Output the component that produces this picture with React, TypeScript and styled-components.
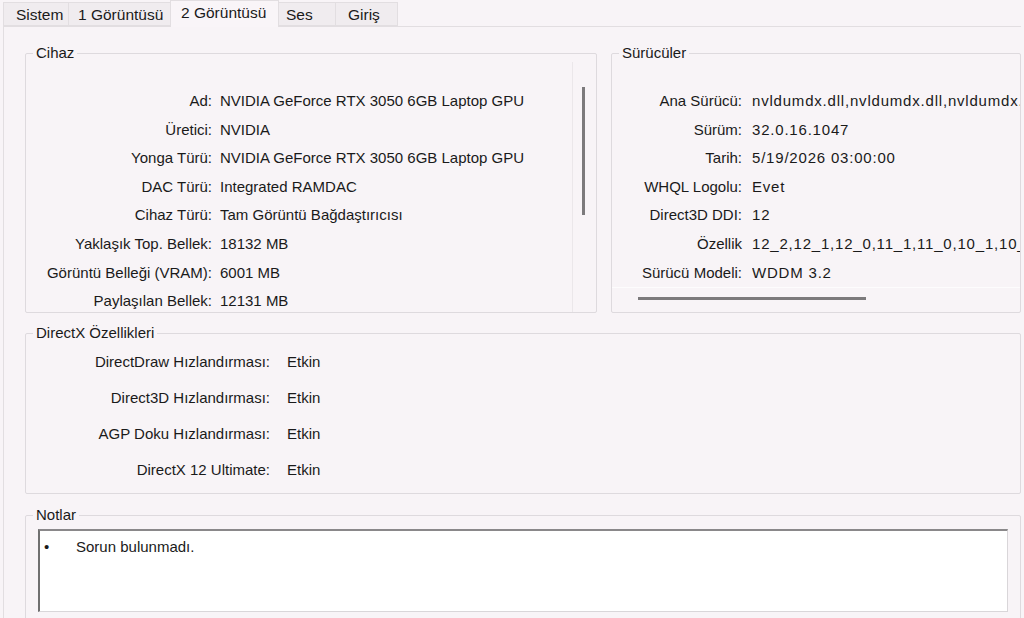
import React from 'react';
import styled, { createGlobalStyle } from 'styled-components';

type Field = { label: string; value: string };

const GlobalStyle = createGlobalStyle`
  html, body {
    margin: 0;
    padding: 0;
    background: #f8f4f7;
    overflow: hidden;
  }
  body {
    font-family: "Liberation Sans", Arial, sans-serif;
    font-size: 15px;
    color: #1a1a1a;
  }
`;

const Window = styled.div`
  width: 1024px;
  height: 618px;
  overflow: hidden;
`;

// Tab strip along the top
const TabStrip = styled.div`
  display: flex;
  align-items: flex-end;
  height: 26px;
  padding-left: 3px;
`;

const Tab = styled.div<{ $w: number; $pl: number; $active?: boolean }>`
  box-sizing: border-box;
  width: ${(p) => p.$w}px;
  height: ${(p) => (p.$active ? 27 : 24)}px;
  margin-left: -1px;
  margin-bottom: ${(p) => (p.$active ? -1 : 0)}px;
  padding-left: ${(p) => p.$pl}px;
  line-height: ${(p) => (p.$active ? 24 : 23)}px;
  font-size: 15.5px;
  background: ${(p) => (p.$active ? '#f9f5f8' : '#f0ecef')};
  border: 1px solid #e2dee1;
  border-bottom: ${(p) => (p.$active ? 'none' : '1px solid #e2dee1')};
  position: relative;
  z-index: ${(p) => (p.$active ? 1 : 0)};
  white-space: nowrap;
  &:first-child {
    margin-left: 0;
  }
`;

const Panel = styled.div`
  box-sizing: border-box;
  width: 1018px;
  margin-left: 3px;
  padding: 17px 0 0 21px;
  border-top: 1px solid #e2dee1;
  border-left: 1px solid #e2dee1;
  height: 600px;
`;

const TopRow = styled.div`
  display: grid;
  grid-template-columns: 572px 410px;
  column-gap: 14px;
  height: 269px;
`;

const Group = styled.fieldset<{ $h: number; $mt?: number }>`
  box-sizing: border-box;
  margin: ${(p) => p.$mt ?? 0}px 0 0 0;
  padding: 0;
  min-width: 0;
  height: ${(p) => p.$h}px;
  border: 1px solid #dedade;
  border-radius: 2px;
  display: flex;
  flex-direction: column;
  overflow: hidden;
`;

const Legend = styled.legend`
  margin-left: 7px;
  padding: 0 3px;
  line-height: 18px;
`;

const ScrollBox = styled.div`
  flex: 1;
  display: flex;
  min-height: 0;
`;

const Rows = styled.div<{ $label: number; $gap: number; $row: number; $pt: number; $spaced?: boolean }>`
  flex: 1;
  min-width: 0;
  min-height: 0;
  overflow: hidden;
  display: grid;
  grid-template-columns: ${(p) => p.$label}px 1fr;
  column-gap: ${(p) => p.$gap}px;
  grid-auto-rows: ${(p) => p.$row}px;
  align-content: start;
  padding-top: ${(p) => p.$pt}px;
  line-height: ${(p) => p.$row}px;
  & > div:nth-child(2n) {
    letter-spacing: ${(p) => (p.$spaced ? '0.8px' : 'normal')};
  }
`;

const Label = styled.div`
  text-align: right;
  white-space: nowrap;
`;

const Value = styled.div`
  white-space: nowrap;
  overflow: hidden;
`;

const VTrack = styled.div`
  width: 23px;
  border-left: 1px solid #ebe7ea;
`;

const VThumb = styled.div`
  width: 3px;
  height: 128px;
  margin: 25px 0 0 9px;
  background: #7c7a7c;
`;

const HTrack = styled.div`
  height: 24px;
  border-top: 1px solid #fdfcfd;
`;

const HThumb = styled.div`
  width: 228px;
  height: 3px;
  margin: 9px 0 0 26px;
  background: #7c7a7c;
`;

const NoteBox = styled.div`
  box-sizing: border-box;
  width: 970px;
  height: 83px;
  margin: 5px 0 0 12px;
  padding: 7px 0 0 4px;
  background: #ffffff;
  border-top: 2px solid #8a888a;
  border-left: 2px solid #707070;
  border-right: 1px solid #d9d6d9;
  border-bottom: 1px solid #d9d6d9;
`;

const NoteItem = styled.div`
  display: flex;
  line-height: 18px;
`;

const Bullet = styled.span`
  width: 32px;
`;

const device: Field[] = [
  { label: 'Ad:', value: 'NVIDIA GeForce RTX 3050 6GB Laptop GPU' },
  { label: 'Üretici:', value: 'NVIDIA' },
  { label: 'Yonga Türü:', value: 'NVIDIA GeForce RTX 3050 6GB Laptop GPU' },
  { label: 'DAC Türü:', value: 'Integrated RAMDAC' },
  { label: 'Cihaz Türü:', value: 'Tam Görüntü Bağdaştırıcısı' },
  { label: 'Yaklaşık Top. Bellek:', value: '18132 MB' },
  { label: 'Görüntü Belleği (VRAM):', value: '6001 MB' },
  { label: 'Paylaşılan Bellek:', value: '12131 MB' },
];

const drivers: Field[] = [
  { label: 'Ana Sürücü:', value: 'nvldumdx.dll,nvldumdx.dll,nvldumdx.dll,nvldumdx.dll' },
  { label: 'Sürüm:', value: '32.0.16.1047' },
  { label: 'Tarih:', value: '5/19/2026 03:00:00' },
  { label: 'WHQL Logolu:', value: 'Evet' },
  { label: 'Direct3D DDI:', value: '12' },
  { label: 'Özellik', value: '12_2,12_1,12_0,11_1,11_0,10_1,10_0,9_3' },
  { label: 'Sürücü Modeli:', value: 'WDDM 3.2' },
];

const features: Field[] = [
  { label: 'DirectDraw Hızlandırması:', value: 'Etkin' },
  { label: 'Direct3D Hızlandırması:', value: 'Etkin' },
  { label: 'AGP Doku Hızlandırması:', value: 'Etkin' },
  { label: 'DirectX 12 Ultimate:', value: 'Etkin' },
];

const tabs = [
  { name: 'Sistem', w: 66, pl: 12 },
  { name: '1 Görüntüsü', w: 103, pl: 9 },
  { name: '2 Görüntüsü', w: 109, pl: 10 },
  { name: 'Ses', w: 58, pl: 7 },
  { name: 'Giriş', w: 63, pl: 12 },
];

const FieldRows = ({ fields }: { fields: Field[] }) => (
  <>
    {fields.map((f) => (
      <React.Fragment key={f.label}>
        <Label>{f.label}</Label>
        <Value>{f.value}</Value>
      </React.Fragment>
    ))}
  </>
);

const App = () => {
  return (
    <Window>
      <GlobalStyle />
      <TabStrip>
        {tabs.map((t) => (
          <Tab key={t.name} $w={t.w} $pl={t.pl} $active={t.name === '2 Görüntüsü'}>
            {t.name}
          </Tab>
        ))}
      </TabStrip>
      <Panel>
        <TopRow>
          <Group $h={269}>
            <Legend>Cihaz</Legend>
            <ScrollBox>
              <Rows $label={186} $gap={8} $row={28.6} $pt={25}>
                <FieldRows fields={device} />
              </Rows>
              <VTrack>
                <VThumb />
              </VTrack>
            </ScrollBox>
          </Group>
          <Group $h={269}>
            <Legend>Sürücüler</Legend>
            <Rows $label={130} $gap={10} $row={28.6} $pt={25} $spaced>
              <FieldRows fields={drivers} />
            </Rows>
            <HTrack>
              <HThumb />
            </HTrack>
          </Group>
        </TopRow>
        <Group $h={170} $mt={11}>
          <Legend>DirectX Özellikleri</Legend>
          <Rows $label={244} $gap={17} $row={36} $pt={2}>
            <FieldRows fields={features} />
          </Rows>
        </Group>
        <Group $h={115} $mt={12}>
          <Legend>Notlar</Legend>
          <NoteBox>
            <NoteItem>
              <Bullet>•</Bullet>
              <span>Sorun bulunmadı.</span>
            </NoteItem>
          </NoteBox>
        </Group>
      </Panel>
    </Window>
  );
};

export default App;
